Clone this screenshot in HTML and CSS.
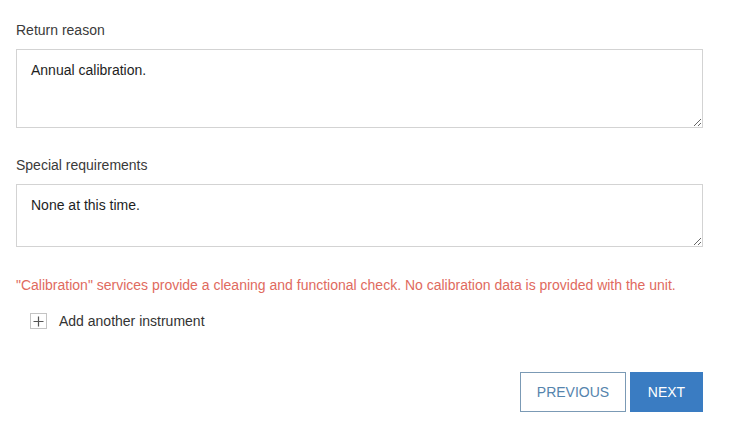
FILE: index.html
```html
<!DOCTYPE html>
<html>
<head>
<meta charset="utf-8">
<link rel="stylesheet" href="styles.css">
</head>
<body>
<form class="form">
  <label class="label label-first" for="reason">Return reason</label>
  <textarea id="reason" class="field field-tall">Annual calibration.</textarea>
  <label class="label" for="special">Special requirements</label>
  <textarea id="special" class="field field-short">None at this time.</textarea>
  <p class="notice">"Calibration" services provide a cleaning and functional check. No calibration data is provided with the unit.</p>
  <div class="add-row">
    <span class="plus-box">
      <svg width="11" height="11" viewBox="0 0 11 11"><path d="M5.5 0.5v10M0.5 5.5h10" stroke="#555" stroke-width="1.2" fill="none"/></svg>
    </span>
    <span class="add-text">Add another instrument</span>
  </div>
  <div class="actions">
    <button type="button" class="btn btn-prev">PREVIOUS</button>
    <button type="button" class="btn btn-next">NEXT</button>
  </div>
</form>
</body>
</html>
```
FILE: styles.css
```css
html, body {
  margin: 0;
  padding: 0;
  background: #fff;
}
body {
  font-family: "Liberation Sans", Arial, sans-serif;
  font-size: 14px;
  line-height: 20px;
  color: #333;
}
.form {
  width: 687px;
  padding: 20px 0 0 16px;
  display: flex;
  flex-direction: column;
}
.label {
  display: block;
  color: #3a3a3a;
  margin-top: 27px;
  margin-bottom: 9px;
}
.label-first {
  margin-top: 0;
}
.field {
  display: block;
  box-sizing: border-box;
  width: 687px;
  margin: 0;
  padding: 10px 14px;
  border: 1px solid #d3d3d3;
  border-radius: 0;
  font-family: "Liberation Sans", Arial, sans-serif;
  font-size: 14px;
  line-height: 20px;
  color: #1e1e1e;
  background: #fff;
  outline: none;
  resize: vertical;
}
.field-tall {
  height: 79px;
}
.field-short {
  height: 63px;
}
.notice {
  margin: 28px 0 0 0;
  color: #e06a5e;
  white-space: nowrap;
}
.add-row {
  display: flex;
  align-items: center;
  margin-top: 16px;
  padding-left: 14px;
  height: 20px;
}
.plus-box {
  box-sizing: border-box;
  width: 17px;
  height: 16px;
  border: 1px solid #c4c4c4;
  display: flex;
  align-items: center;
  justify-content: center;
}
.add-text {
  margin-left: 12px;
  color: #333;
}
.actions {
  display: flex;
  justify-content: flex-end;
  gap: 4px;
  margin-top: 41px;
}
.btn {
  box-sizing: border-box;
  height: 40px;
  margin: 0;
  font-family: "Liberation Sans", Arial, sans-serif;
  font-size: 14px;
  border-radius: 0;
  cursor: pointer;
}
.btn-prev {
  width: 106px;
  background: #fff;
  color: #5584ad;
  border: 1px solid #7b9ab5;
}
.btn-next {
  width: 73px;
  background: #3a7cc2;
  color: #fff;
  border: 1px solid #3a7cc2;
}
```
